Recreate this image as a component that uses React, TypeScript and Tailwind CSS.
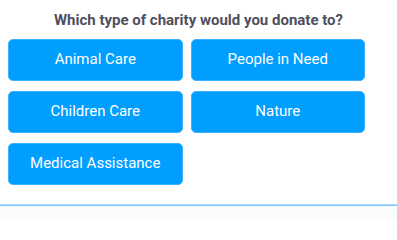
const options = ['Animal Care', 'People in Need', 'Children Care', 'Nature', 'Medical Assistance'];

export default function App() {
  return (
    <div className="w-[397px] h-[219px] bg-white overflow-hidden" style={{ fontFamily: 'Roboto, "Liberation Sans", sans-serif' }}>
      <div className="h-[204px]">
        <h2 className="pt-[10px] h-[38.7px] text-center text-[15px] leading-[20px] font-bold text-[#4f4f60]">
          Which type of charity would you donate to?
        </h2>
        <div className="ml-2 w-[357px] grid grid-cols-2 gap-x-2 gap-y-[10px]">
          {options.map((o) => (
            <button
              key={o}
              className="h-[42px] rounded-[5px] bg-[#009eff] border border-[#3bb0ff] text-white text-[15px] font-normal"
            >
              {o}
            </button>
          ))}
        </div>
      </div>
      <div className="h-px bg-[#b3dcfd]" />
      <div className="h-px bg-[#7cc4fb]" />
      <div className="h-[13px] bg-[#fafbfc]" />
    </div>
  );
}
